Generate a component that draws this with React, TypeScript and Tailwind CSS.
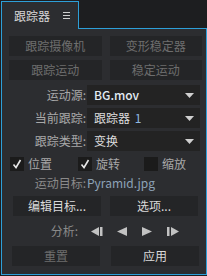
const font = { fontFamily: '"Noto Sans CJK SC", "Noto Sans", sans-serif' };

function Btn({ label, enabled = false, className = '' }: { label: string; enabled?: boolean; className?: string }) {
  return (
    <div
      className={`h-[20px] bg-[#242527] flex items-center justify-center text-[12px] ${
        enabled ? 'text-[#dadada]' : 'text-[#6e6e6e]'
      } ${className}`}
    >
      {label}
    </div>
  );
}

function Arrow() {
  return (
    <svg width="9" height="5" viewBox="0 0 9 5" className="mr-[6px]">
      <path d="M0 0H9L4.5 5Z" fill="#d0d0d0" />
    </svg>
  );
}

function Select({ label, children }: { label: string; children: React.ReactNode }) {
  return (
    <div className="flex items-center h-[20px]">
      <div className="w-[85px] text-right pr-[1px] text-[#a8a8a8] text-[12px]">{label}:</div>
      <div className="w-[113px] h-full bg-[#232323] flex items-center justify-between pl-[7px]">
        <div className="text-[12px] text-[#dcdcdc]">{children}</div>
        <Arrow />
      </div>
    </div>
  );
}

function Check({ label, checked, className = '' }: { label: string; checked: boolean; className?: string }) {
  return (
    <div className={`flex items-center gap-[4px] ${className}`}>
      <div className="w-[14px] h-[14px] bg-[#1b1b1b] flex items-center justify-center">
        {checked && (
          <svg width="10" height="10" viewBox="0 0 10 10">
            <path d="M1.5 5.5L4 8.5L8.5 1" stroke="#e6e6e6" strokeWidth="1.6" fill="none" />
          </svg>
        )}
      </div>
      <span className="text-[12px] text-[#a8a8a8]">{label}</span>
    </div>
  );
}

export default function App() {
  return (
    <div className="w-[207px] h-[276px] bg-[#1d1e20] pl-px pb-px flex flex-col leading-none" style={font}>
      {/* tab strip */}
      <div className="flex h-[29px] pt-px shrink-0">
        <div className="w-[78px] border-l border-t border-r border-[#2d9fd8] bg-[#2c2d30] flex items-center pl-[12px] gap-[13px]">
          <span className="text-[12px] text-[#d6d6d6]">跟踪器</span>
          <svg width="7" height="7" viewBox="0 0 7 7">
            <path d="M0 0.5H7M0 3.5H7M0 6.5H7" stroke="#cfcfcf" strokeWidth="1" />
          </svg>
        </div>
        <div className="flex-1 border-b border-[#2d9fd8]" />
      </div>

      {/* panel */}
      <div className="flex-1 bg-[#2c2d30] border-l border-r border-b border-[#2d9fd8] flex flex-col">
        <div className="grid grid-cols-2 gap-x-[8px] gap-y-[4px] pl-[7px] pr-[4px] pt-[7px]">
          <Btn label="跟踪摄像机" />
          <Btn label="变形稳定器" />
          <Btn label="跟踪运动" />
          <Btn label="稳定运动" />
        </div>

        <div className="flex flex-col gap-[3px] mt-[5px]">
          <Select label="运动源">
            <span className="text-[#e2ebf3] font-medium">BG.mov</span>
          </Select>
          <Select label="当前跟踪">
            跟踪器 <span className="text-[#8fb8e0] ml-[2px]">1</span>
          </Select>
          <Select label="跟踪类型">变换</Select>
        </div>

        <div className="flex items-center mt-[6px] pl-[8px] h-[14px]">
          <Check label="位置" checked className="w-[68px]" />
          <Check label="旋转" checked className="w-[66px]" />
          <Check label="缩放" checked={false} />
        </div>

        <div className="flex items-center h-[14px] mt-[5px] text-[12px]">
          <div className="w-[85px] text-right pr-[1px] text-[#8a8a8a]">运动目标:</div>
          <span className="text-[#8ea3b8]">Pyramid.jpg</span>
        </div>

        <div className="flex pl-[11px] gap-[9px] mt-[6px]">
          <Btn label="编辑目标..." enabled className="w-[88px]" />
          <Btn label="选项..." enabled className="w-[88px]" />
        </div>

        <div className="flex items-center h-[14px] mt-[8px]">
          <div className="w-[76px] text-right text-[12px] text-[#8a8a8a]">分析:</div>
          <div className="flex items-center ml-[13px] gap-[14px]">
            <svg width="12" height="9" viewBox="0 0 12 9">
              <path d="M0 4.5L8 0V9Z" fill="#c2c2c2" />
              <rect x="9" y="0" width="2.5" height="9" fill="#c2c2c2" />
            </svg>
            <svg width="10" height="9" viewBox="0 0 10 9">
              <path d="M0 4.5L10 0V9Z" fill="#c2c2c2" />
            </svg>
            <svg width="10" height="9" viewBox="0 0 10 9" className="ml-[1px]">
              <path d="M10 4.5L0 0V9Z" fill="#c2c2c2" />
            </svg>
            <svg width="12" height="9" viewBox="0 0 12 9" className="ml-[1px]">
              <rect x="0" y="0" width="2.5" height="9" fill="#c2c2c2" />
              <path d="M12 4.5L4 0V9Z" fill="#c2c2c2" />
            </svg>
          </div>
        </div>

        <div className="flex pl-[10px] gap-[11px] mt-[8px]">
          <Btn label="重置" className="w-[88px]" />
          <Btn label="应用" enabled className="w-[88px]" />
        </div>
      </div>
    </div>
  );
}
